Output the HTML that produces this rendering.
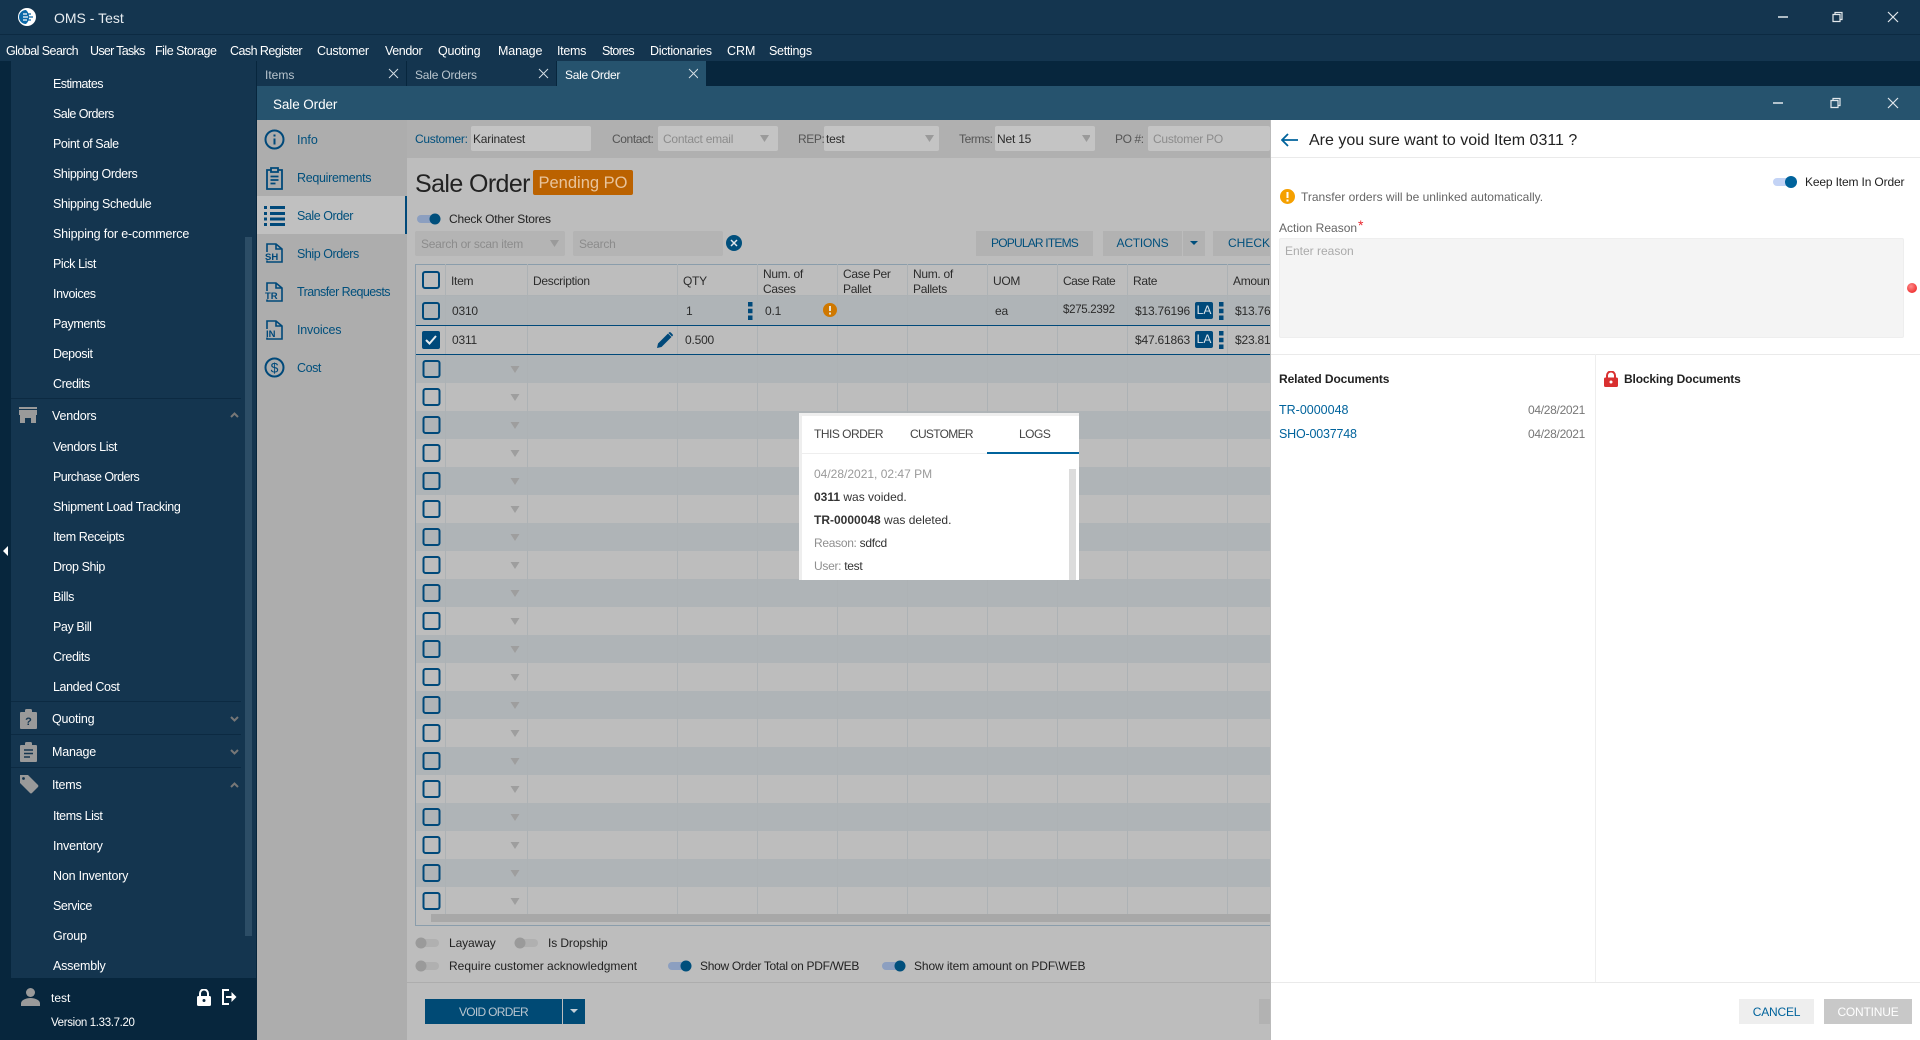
<!DOCTYPE html>
<html lang="en">
<head>
<meta charset="utf-8">
<title>OMS - Test</title>
<style>
html,body{margin:0;padding:0;width:1920px;height:1040px;overflow:hidden;background:#14354f;font-family:"Liberation Sans",sans-serif;font-size:12.5px;color:#222}
div,span,svg{box-sizing:border-box}
.a,.t{position:absolute}
.t{white-space:nowrap;line-height:16px}
.w{color:#fff}
.m{color:#fff;top:43px;font-size:12.5px;letter-spacing:-.3px}
.s{color:#fff;left:53px;font-size:12.5px;letter-spacing:-.4px}
.h{color:#fff;left:52px;font-size:12.5px;letter-spacing:-.2px}
.n{color:#004f7c;left:297px;font-size:12.5px;letter-spacing:-.45px}
.i{background:#c4c4c4;border-radius:2px;top:126px;height:25px}
.lb{color:#555;top:131px;font-size:12px;letter-spacing:-.4px}
.ph{color:#8c8c8c;font-size:12px;letter-spacing:-.25px}
.th{color:#2c2c2c;font-size:12px;line-height:14.5px;letter-spacing:-.3px}
.c{color:#2c2c2c;font-size:12px;letter-spacing:-.2px}
.b{background:#b2b2b2;top:231px;height:25px;color:#004f7c;font-size:12px;line-height:25px;text-align:center}
.v{width:1px;top:264px;height:651px;background:#adb2b5}
.sep{left:11px;width:230px;height:1px;background:#0c2a42}
.tg{height:10px;width:24px}
.lt{color:#222;font-size:12px;letter-spacing:-.2px}
.p{color:#333;font-size:12px;left:814px}
</style>
</head>
<body>
<!-- top bars -->
<div class="a" style="left:0;top:0;width:1920px;height:34px;background:#14354f"></div>
<div class="a" style="left:0;top:34px;width:1920px;height:1px;background:#0c2a42"></div>
<svg class="a" style="left:18px;top:8px" width="18" height="18" viewBox="0 0 18 18"><circle cx="9" cy="9" r="9" fill="#fff"/><path d="M8 2A7 7 0 0 0 8 16A9 9 0 0 0 11 9A9 9 0 0 0 8 2z" fill="#0b69a8"/><path d="M5 6h8M4 9h11M5 12h8" stroke="#0b69a8" stroke-width="1.300"/><path d="M5 6h4M5 9h5M5 12h4" stroke="#fff" stroke-width="1.300"/></svg>
<div class="t w" style="left:54px;top:10px;font-size:14px;color:#e8edf1">OMS - Test</div>
<svg class="a" style="left:1775px;top:10px" width="130" height="14" fill="none" stroke="#e2e8ec" stroke-width="1.200"><path d="M3 7h10" stroke-width="1.500"/><path d="M58 4.500h7v7h-7zM60 4.500v-2h7v7h-2"/><path d="M113 2l10 10M123 2l-10 10"/></svg>

<div class="t m" style="left:6px;letter-spacing:-.55px">Global Search</div>
<div class="t m" style="left:90px;letter-spacing:-.7px">User Tasks</div>
<div class="t m" style="left:155px;letter-spacing:-.5px">File Storage</div>
<div class="t m" style="left:230px;letter-spacing:-.55px">Cash Register</div>
<div class="t m" style="left:317px">Customer</div>
<div class="t m" style="left:385px;letter-spacing:-.4px">Vendor</div>
<div class="t m" style="left:438px;letter-spacing:-.2px">Quoting</div>
<div class="t m" style="left:498px;letter-spacing:-.15px">Manage</div>
<div class="t m" style="left:557px">Items</div>
<div class="t m" style="left:602px;letter-spacing:-.7px">Stores</div>
<div class="t m" style="left:650px">Dictionaries</div>
<div class="t m" style="left:727px;letter-spacing:0">CRM</div>
<div class="t m" style="left:769px">Settings</div>

<!-- tab bar -->
<div class="a" style="left:257px;top:61px;width:1663px;height:25px;background:#07263d"></div>
<div class="a" style="left:257px;top:61px;width:149px;height:25px;background:#14354f"></div>
<div class="a" style="left:407px;top:61px;width:149px;height:25px;background:#14354f"></div>
<div class="a" style="left:557px;top:61px;width:149px;height:25px;background:#26536e"></div>
<div class="t" style="left:265px;top:67px;color:#b9c5ce;font-size:12px">Items</div>
<div class="t" style="left:415px;top:67px;color:#b9c5ce;font-size:12px;letter-spacing:-.2px">Sale Orders</div>
<div class="t w" style="left:565px;top:67px;font-size:12px;letter-spacing:-.3px">Sale Order</div>
<svg class="a" style="left:388px;top:68px" width="310" height="12" fill="none" stroke="#d5dde3" stroke-width="1"><path d="M1 1l9 9M10 1l-9 9M151 1l9 9M160 1l-9 9M301 1l9 9M310 1l-9 9"/></svg>

<!-- window header -->
<div class="a" style="left:257px;top:86px;width:1663px;height:34px;background:#26536e"></div>
<div class="t w" style="left:273px;top:97px;font-size:13.5px;letter-spacing:-.1px">Sale Order</div>
<svg class="a" style="left:1770px;top:96px" width="135" height="14" fill="none" stroke="#e2e8ec" stroke-width="1.200"><path d="M3 7h10" stroke-width="1.500"/><path d="M61 4.500h7v7h-7zM63 4.500v-2h7v7h-2"/><path d="M118 2l10 10M128 2l-10 10"/></svg>

<!-- sidebar -->
<div class="a" style="left:0;top:61px;width:11px;height:979px;background:#07263d"></div>
<div class="a" style="left:11px;top:61px;width:245px;height:917px;background:#14354f"></div>
<div class="a" style="left:0;top:978px;width:257px;height:62px;background:#07263d"></div>
<div class="a" style="left:256px;top:61px;width:1px;height:979px;background:#07263d"></div>
<div class="a" style="left:245px;top:237px;width:7px;height:699px;background:#2c4d66"></div>
<svg class="a" style="left:3px;top:546px" width="6" height="10"><path d="M5 0v10L0 5z" fill="#fff"/></svg>

<div class="t s" style="top:76px;letter-spacing:-.55px">Estimates</div>
<div class="t s" style="top:106px;letter-spacing:-.55px">Sale Orders</div>
<div class="t s" style="top:136px">Point of Sale</div>
<div class="t s" style="top:166px">Shipping Orders</div>
<div class="t s" style="top:196px;letter-spacing:-.35px">Shipping Schedule</div>
<div class="t s" style="top:226px;letter-spacing:-.15px">Shipping for e-commerce</div>
<div class="t s" style="top:256px">Pick List</div>
<div class="t s" style="top:286px">Invoices</div>
<div class="t s" style="top:316px">Payments</div>
<div class="t s" style="top:346px">Deposit</div>
<div class="t s" style="top:376px">Credits</div>
<div class="a sep" style="top:398px"></div>
<svg class="a" style="left:19px;top:407px" width="18" height="16" fill="#9a9a9a"><path d="M0 0h18v2H0zM0 3h18v5H0zM1 8h16v8H12v-5H6v5H1zM3 11h2v3H3z"/></svg>
<div class="t h" style="top:408px">Vendors</div>
<svg class="a" style="left:230px;top:412px" width="9" height="6" fill="none" stroke="#777" stroke-width="2"><path d="M1 5l3.5-3.5L8 5"/></svg>
<div class="t s" style="top:439px">Vendors List</div>
<div class="t s" style="top:469px;letter-spacing:-.55px">Purchase Orders</div>
<div class="t s" style="top:499px;letter-spacing:-.33px">Shipment Load Tracking</div>
<div class="t s" style="top:529px">Item Receipts</div>
<div class="t s" style="top:559px">Drop Ship</div>
<div class="t s" style="top:589px">Bills</div>
<div class="t s" style="top:619px">Pay Bill</div>
<div class="t s" style="top:649px">Credits</div>
<div class="t s" style="top:679px">Landed Cost</div>
<div class="a sep" style="top:701px"></div>
<svg class="a" style="left:20px;top:709px" width="17" height="20"><path d="M1 3h4V1.500A1.500 1.500 0 0 1 6.500 0h4A1.500 1.500 0 0 1 12 1.500V3h4a1 1 0 0 1 1 1v15a1 1 0 0 1-1 1H1a1 1 0 0 1-1-1V4a1 1 0 0 1 1-1z" fill="#9a9a9a"/><text x="8.500" y="16" text-anchor="middle" font-size="11" font-family="Liberation Sans" font-weight="700" fill="#14354f">?</text></svg>
<div class="t h" style="top:711px">Quoting</div>
<svg class="a" style="left:230px;top:716px" width="9" height="6" fill="none" stroke="#777" stroke-width="2"><path d="M1 1l3.500 3.500L8 1"/></svg>
<div class="a sep" style="top:734px"></div>
<svg class="a" style="left:20px;top:742px" width="17" height="20"><path d="M1 3h4V1.500A1.500 1.500 0 0 1 6.500 0h4A1.500 1.500 0 0 1 12 1.500V3h4a1 1 0 0 1 1 1v15a1 1 0 0 1-1 1H1a1 1 0 0 1-1-1V4a1 1 0 0 1 1-1z" fill="#9a9a9a"/><path d="M4 8h9M4 11.500h9M4 15h6" stroke="#14354f" stroke-width="1.600"/></svg>
<div class="t h" style="top:744px">Manage</div>
<svg class="a" style="left:230px;top:749px" width="9" height="6" fill="none" stroke="#777" stroke-width="2"><path d="M1 1l3.500 3.500L8 1"/></svg>
<div class="a sep" style="top:767px"></div>
<svg class="a" style="left:19px;top:775px" width="20" height="19"><path d="M1 0h8l10 10a1.500 1.500 0 0 1 0 2l-6 6a1.500 1.500 0 0 1-2 0L1 8z" fill="#9a9a9a"/><circle cx="4.500" cy="3.500" r="1.400" fill="#14354f"/></svg>
<div class="t h" style="top:777px">Items</div>
<svg class="a" style="left:230px;top:782px" width="9" height="6" fill="none" stroke="#777" stroke-width="2"><path d="M1 5l3.500-3.500L8 5"/></svg>
<div class="t s" style="top:808px">Items List</div>
<div class="t s" style="top:838px;letter-spacing:-.2px">Inventory</div>
<div class="t s" style="top:868px;letter-spacing:-.2px">Non Inventory</div>
<div class="t s" style="top:898px">Service</div>
<div class="t s" style="top:928px;letter-spacing:-.2px">Group</div>
<div class="t s" style="top:958px;letter-spacing:-.2px">Assembly</div>
<svg class="a" style="left:21px;top:988px" width="19" height="18" fill="#9a9a9a"><circle cx="9.500" cy="4.500" r="4.500"/><path d="M0 18v-2.500C0 12 5 10 9.500 10S19 12 19 15.500V18z"/></svg>
<div class="t w" style="left:51px;top:990px;font-size:12px">test</div>
<div class="t w" style="left:51px;top:1015px;font-size:11.500px;letter-spacing:-.35px">Version 1.33.7.20</div>
<svg class="a" style="left:197px;top:989px" width="14" height="17"><path d="M3 7V4.500a4 4 0 0 1 8 0V7" fill="none" stroke="#fff" stroke-width="2"/><rect y="7" width="14" height="10" rx="1.500" fill="#fff"/><circle cx="7" cy="11.500" r="1.500" fill="#07263d"/></svg>
<svg class="a" style="left:222px;top:989px" width="16" height="16" fill="none" stroke="#fff" stroke-width="2"><path d="M7 1H1v14h6"/><path d="M4 8h7"/><path d="M9.500 3l5 5-5 5z" fill="#fff" stroke="none"/></svg>

<!-- left nav in window -->
<div class="a" style="left:257px;top:120px;width:150px;height:920px;background:#adadad"></div>
<div class="a" style="left:257px;top:196px;width:150px;height:38px;background:#c0c0c0;border-right:2px solid #00497a"></div>
<div class="t n" style="top:132px;letter-spacing:0">Info</div>
<div class="t n" style="top:170px;letter-spacing:-.3px">Requirements</div>
<div class="t n" style="top:208px">Sale Order</div>
<div class="t n" style="top:246px">Ship Orders</div>
<div class="t n" style="top:284px;letter-spacing:-.55px">Transfer Requests</div>
<div class="t n" style="top:322px;letter-spacing:-.2px">Invoices</div>
<div class="t n" style="top:360px">Cost</div>
<svg class="a" style="left:264px;top:129px" width="21" height="21" fill="none" stroke="#00497a" stroke-width="2"><circle cx="10.500" cy="10.500" r="9"/><path d="M10.500 9.500v6"/><path d="M10.500 5.500v2"/></svg>
<svg class="a" style="left:266px;top:167px" width="17" height="23" fill="none" stroke="#00497a" stroke-width="1.800"><path d="M5 3H1v19h15V3h-4"/><path d="M5 1h7v4H5z"/><path d="M4.500 9.500h8M4.500 13h8M4.500 16.500h5"/></svg>
<svg class="a" style="left:264px;top:205px" width="21" height="21" fill="#00497a"><path d="M0 1h3v3H0zM6 1h15v3H6zM0 7h3v3H0zM6 7h15v3H6zM0 12.500h3v3H0zM6 12.500h15v3H6zM0 18h3v3H0zM6 18h15v3H6z"/></svg>
<svg class="a" style="left:265px;top:243px" width="19" height="20"><path d="M2 9V1h9l6 5v13H2v-1.500M11 1v5h6" fill="none" stroke="#00497a" stroke-width="1.600"/><rect x="0" y="9.500" width="15" height="8" fill="#adadad"/><text x="0" y="17" font-family="Liberation Sans" font-weight="700" font-size="9.500" fill="#00497a">SH</text></svg>
<svg class="a" style="left:265px;top:282px" width="19" height="20"><path d="M2 9V1h9l6 5v13H2v-1.500M11 1v5h6" fill="none" stroke="#00497a" stroke-width="1.600"/><rect x="0" y="9.500" width="15" height="8" fill="#adadad"/><text x="0" y="17" font-family="Liberation Sans" font-weight="700" font-size="9.500" fill="#00497a">TR</text></svg>
<svg class="a" style="left:265px;top:320px" width="19" height="20"><path d="M2 9V1h9l6 5v13H2v-1.500M11 1v5h6" fill="none" stroke="#00497a" stroke-width="1.600"/><rect x="0" y="9.500" width="15" height="8" fill="#adadad"/><text x="1" y="17" font-family="Liberation Sans" font-weight="700" font-size="9.500" fill="#00497a">IN</text></svg>
<svg class="a" style="left:264px;top:357px" width="21" height="21"><circle cx="10.500" cy="10.500" r="9" fill="none" stroke="#00497a" stroke-width="2"/><text x="10.500" y="15.500" text-anchor="middle" font-family="Liberation Sans" font-size="14" fill="#00497a">$</text></svg>

<!-- main content -->
<div class="a" style="left:407px;top:120px;width:863px;height:920px;background:#bdbdbd"></div>
<div class="a" style="left:407px;top:120px;width:863px;height:38px;background:#b0b0b0"></div>
<div class="t lb" style="left:415px;color:#004f7c;letter-spacing:-.3px">Customer:</div>
<div class="a i" style="left:471px;width:120px"></div>
<div class="t c" style="left:473px;top:131px">Karinatest</div>
<div class="t lb" style="left:612px">Contact:</div>
<div class="a i" style="left:658px;width:120px"></div>
<div class="t ph" style="left:663px;top:131px">Contact email</div>
<div class="t lb" style="left:798px">REP:</div>
<div class="a i" style="left:824px;width:115px"></div>
<div class="t c" style="left:826px;top:131px">test</div>
<div class="t lb" style="left:959px">Terms:</div>
<div class="a i" style="left:995px;width:100px"></div>
<div class="t c" style="left:997px;top:131px">Net 15</div>
<div class="t lb" style="left:1115px">PO #:</div>
<div class="a i" style="left:1148px;width:122px"></div>
<div class="t ph" style="left:1153px;top:131px">Customer PO</div>
<svg class="a" style="left:760px;top:135px" width="330" height="8" fill="#9a9a9a"><path d="M0 0h9L4.500 7zM165 0h9l-4.500 7zM322 0h9l-4.500 7z"/></svg>

<div class="t" style="left:415px;top:169px;font-size:25px;line-height:30px;color:#222;letter-spacing:-.6px">Sale Order</div>
<div class="a" style="left:533px;top:170px;width:100px;height:25px;background:#bb6200;border-radius:2px;color:#e8c49c;font-size:16.500px;line-height:26px;text-align:center">Pending PO</div>

<svg class="a tg" style="left:417px;top:212px;height:14px" width="24" height="14"><rect y="3" width="22" height="8" rx="4" fill="#8c9fc0"/><circle cx="18" cy="7" r="5.500" fill="#004f7c"/></svg>
<div class="t lt" style="left:449px;top:211px">Check Other Stores</div>

<div class="a" style="left:415px;top:231px;width:150px;height:25px;background:#b4b4b4;border-radius:2px"></div>
<div class="t ph" style="left:421px;top:236px">Search or scan item</div>
<svg class="a" style="left:550px;top:240px" width="9" height="8"><path d="M0 0h9L4.500 7z" fill="#9a9a9a"/></svg>
<div class="a" style="left:573px;top:231px;width:150px;height:25px;background:#b4b4b4;border-radius:2px"></div>
<div class="t ph" style="left:579px;top:236px">Search</div>
<svg class="a" style="left:726px;top:235px" width="16" height="16"><circle cx="8" cy="8" r="8" fill="#004f7c"/><path d="M5 5l6 6M11 5l-6 6" stroke="#dfe6ea" stroke-width="1.500"/></svg>

<div class="a b" style="left:976px;width:117px;letter-spacing:-.8px">POPULAR ITEMS</div>
<div class="a b" style="left:1103px;width:79px;letter-spacing:-.2px">ACTIONS</div>
<div class="a b" style="left:1183px;width:22px"></div>
<svg class="a" style="left:1190px;top:241px" width="8" height="5"><path d="M0 0h8L4 4z" fill="#004f7c"/></svg>
<div class="a b" style="left:1213px;width:57px;text-align:left;padding-left:15px">CHECK</div>

<!-- table -->
<div class="a" style="left:415px;top:264px;width:855px;height:662px;border:1px solid #8a9dab;border-right:0"></div>
<div class="a" style="left:416px;top:295px;width:854px;height:30px;background:#afb4b7"></div>
<div class="a" style="left:416px;top:295px;width:854px;height:1px;background:#adb2b5"></div>
<div class="a" style="left:416px;top:355px;width:854px;height:560px;background:repeating-linear-gradient(#afb4b7 0 28px,#bdbdbd 28px 56px)"></div>
<div class="a v" style="left:445px"></div>
<div class="a v" style="left:527px"></div>
<div class="a v" style="left:677px"></div>
<div class="a v" style="left:757px"></div>
<div class="a v" style="left:837px"></div>
<div class="a v" style="left:907px"></div>
<div class="a v" style="left:987px"></div>
<div class="a v" style="left:1057px"></div>
<div class="a v" style="left:1127px"></div>
<div class="a v" style="left:1227px"></div>
<div class="a" style="left:416px;top:325px;width:854px;height:1px;background:#00497a"></div>
<div class="a" style="left:416px;top:354px;width:854px;height:1px;background:#00497a"></div>
<div class="a" style="left:431px;top:914px;width:839px;height:8px;background:#a8a8a8"></div>

<div class="t th" style="left:451px;top:274px">Item</div>
<div class="t th" style="left:533px;top:274px">Description</div>
<div class="t th" style="left:683px;top:274px">QTY</div>
<div class="t th" style="left:763px;top:267px">Num. of<br>Cases</div>
<div class="t th" style="left:843px;top:267px">Case Per<br>Pallet</div>
<div class="t th" style="left:913px;top:267px">Num. of<br>Pallets</div>
<div class="t th" style="left:993px;top:274px">UOM</div>
<div class="t th" style="left:1063px;top:274px;letter-spacing:-.5px">Case Rate</div>
<div class="t th" style="left:1133px;top:274px">Rate</div>
<div class="t th" style="left:1233px;top:274px">Amount</div>

<svg class="a" style="left:422px;top:271px" width="19" height="80"><rect x="1" y="1" width="16" height="16" rx="2" fill="none" stroke="#00497a" stroke-width="2"/><rect x="1" y="32" width="16" height="16" rx="2" fill="none" stroke="#00497a" stroke-width="2"/><rect y="60" width="18" height="18" rx="2" fill="#00497a"/><path d="M4 69l3.500 3.500L14 65" fill="none" stroke="#e6ebee" stroke-width="2"/></svg>
<svg class="a" style="left:415px;top:355px" width="110" height="560"><defs><pattern id="r" width="110" height="28" patternUnits="userSpaceOnUse"><rect x="8.500" y="6" width="16" height="16" rx="2" fill="none" stroke="#00497a" stroke-width="2"/><path d="M95.500 11h9l-4.500 7z" fill="#9e9e9e"/></pattern></defs><rect width="110" height="560" fill="url(#r)"/></svg>

<div class="t c" style="left:452px;top:303px">0310</div>
<div class="t c" style="left:686px;top:303px">1</div>
<div class="t c" style="left:765px;top:303px">0.1</div>
<div class="t c" style="left:995px;top:303px">ea</div>
<div class="t c" style="left:1063px;top:302px;font-size:11.500px;letter-spacing:-.3px">$275.2392</div>
<div class="t c" style="left:1135px;top:303px">$13.76196</div>
<div class="t c" style="left:1235px;top:303px">$13.76</div>
<div class="t c" style="left:452px;top:332px">0311</div>
<div class="t c" style="left:685px;top:332px">0.500</div>
<div class="t c" style="left:1135px;top:332px">$47.61863</div>
<div class="t c" style="left:1235px;top:332px">$23.81</div>
<svg class="a" style="left:748px;top:302px" width="5" height="18" fill="#00497a"><path d="M0 0h4.500v4.500H0zM0 6.800h4.500v4.500H0zM0 13.500h4.500V18H0z"/></svg>
<svg class="a" style="left:1219px;top:302px" width="5" height="18" fill="#00497a"><path d="M0 0h4.500v4.500H0zM0 6.800h4.500v4.500H0zM0 13.500h4.500V18H0z"/></svg>
<svg class="a" style="left:1219px;top:331px" width="5" height="18" fill="#00497a"><path d="M0 0h4.500v4.500H0zM0 6.800h4.500v4.500H0zM0 13.500h4.500V18H0z"/></svg>
<div class="a" style="left:1195px;top:302px;width:18px;height:17px;background:#00497a;border-radius:2px;color:#dfe6ea;font-size:12px;line-height:17px;text-align:center">LA</div>
<div class="a" style="left:1195px;top:331px;width:18px;height:17px;background:#00497a;border-radius:2px;color:#dfe6ea;font-size:12px;line-height:17px;text-align:center">LA</div>
<svg class="a" style="left:823px;top:303px" width="14" height="14"><circle cx="7" cy="7" r="7" fill="#cf7800"/><path d="M7 3v5" stroke="#e9e4d8" stroke-width="2"/><path d="M7 9.500v2" stroke="#e9e4d8" stroke-width="2"/></svg>
<svg class="a" style="left:657px;top:332px" width="16" height="16" fill="#00497a"><path d="M0 16l1-4.500L11 1.500 14.500 5 4.500 15zM12 .5a1.300 1.300 0 0 1 1.800 0l1.700 1.700a1.300 1.300 0 0 1 0 1.800L15 4.500 11.500 1z"/></svg>

<!-- popup -->
<div class="a" style="left:799px;top:413px;width:280px;height:167px;background:#fff;border-left:3px solid #eee;border-top:3px solid #eee"></div>
<div class="t" style="left:814px;top:426px;font-size:12px;color:#444;letter-spacing:-.5px">THIS ORDER</div>
<div class="t" style="left:910px;top:426px;font-size:12px;color:#444;letter-spacing:-.7px">CUSTOMER</div>
<div class="t" style="left:1019px;top:426px;font-size:12px;color:#444;letter-spacing:-.5px">LOGS</div>
<div class="a" style="left:802px;top:453px;width:277px;height:1px;background:#eee"></div>
<div class="a" style="left:987px;top:452px;width:92px;height:2px;background:#00639c"></div>
<div class="a" style="left:1069px;top:469px;width:7px;height:111px;background:#dcdcdc"></div>
<div class="t p" style="top:466px;color:#9a9a9a">04/28/2021, 02:47 PM</div>
<div class="t p" style="top:489px"><b>0311</b> was voided.</div>
<div class="t p" style="top:512px"><b>TR-0000048</b> was deleted.</div>
<div class="t p" style="top:535px;letter-spacing:-.3px"><span style="color:#8f8f8f">Reason:</span> sdfcd</div>
<div class="t p" style="top:558px;letter-spacing:-.3px"><span style="color:#8f8f8f">User:</span> test</div>

<!-- bottom toggles -->
<svg class="a" style="left:415px;top:936px" width="125" height="14"><rect x="2" y="3" width="22" height="8" rx="4" fill="#b0b0b0"/><circle cx="6" cy="7" r="5.500" fill="#9a9a9a"/><rect x="101" y="3" width="22" height="8" rx="4" fill="#b0b0b0"/><circle cx="105" cy="7" r="5.500" fill="#9a9a9a"/></svg>
<svg class="a" style="left:415px;top:959px" width="495" height="14"><rect x="2" y="3" width="22" height="8" rx="4" fill="#b0b0b0"/><circle cx="6" cy="7" r="5.500" fill="#9a9a9a"/><rect x="253" y="3" width="22" height="8" rx="4" fill="#8c9fc0"/><circle cx="271" cy="7" r="5.500" fill="#004f7c"/><rect x="467" y="3" width="22" height="8" rx="4" fill="#8c9fc0"/><circle cx="485" cy="7" r="5.500" fill="#004f7c"/></svg>
<div class="t lt" style="left:449px;top:935px;letter-spacing:-.1px">Layaway</div>
<div class="t lt" style="left:548px;top:935px;letter-spacing:-.1px">Is Dropship</div>
<div class="t lt" style="left:449px;top:958px;letter-spacing:0">Require customer acknowledgment</div>
<div class="t lt" style="left:700px;top:958px;letter-spacing:-.3px">Show Order Total on PDF/WEB</div>
<div class="t lt" style="left:914px;top:958px;letter-spacing:-.1px">Show item amount on PDF\WEB</div>
<div class="a" style="left:407px;top:982px;width:863px;height:1px;background:#adadad"></div>
<div class="a" style="left:425px;top:999px;width:137px;height:25px;background:#004a75;color:#b8c5cf;font-size:12px;line-height:27px;text-align:center;letter-spacing:-.7px">VOID ORDER</div>
<div class="a" style="left:563px;top:999px;width:22px;height:25px;background:#004a75"></div>
<svg class="a" style="left:570px;top:1009px" width="8" height="5"><path d="M0 0h8L4 4z" fill="#c4cfd8"/></svg>
<div class="a" style="left:1259px;top:999px;width:11px;height:25px;background:#b2b2b2"></div>

<!-- right panel -->
<div class="a" style="left:1270px;top:120px;width:650px;height:920px;background:#fff;border-left:1px solid #bbb"></div>
<svg class="a" style="left:1281px;top:133px" width="17" height="14" fill="none" stroke="#00639c" stroke-width="1.800"><path d="M1 7h16M7 1L1 7l6 6"/></svg>
<div class="t" style="left:1309px;top:132px;font-size:16px;line-height:18px;color:#222">Are you sure want to void Item 0311 ?</div>
<div class="a" style="left:1271px;top:157px;width:649px;height:1px;background:#eaeaea"></div>
<svg class="a" style="left:1773px;top:175px" width="25" height="14"><rect y="3" width="22" height="8" rx="4" fill="#c3d3f5"/><circle cx="18" cy="7" r="6" fill="#00639c"/></svg>
<div class="t" style="left:1805px;top:174px;font-size:12px;color:#222;letter-spacing:-.15px">Keep Item In Order</div>
<svg class="a" style="left:1280px;top:189px" width="15" height="15"><circle cx="7.500" cy="7.500" r="7.500" fill="#f5a000"/><path d="M7.500 3v6" stroke="#fff" stroke-width="2"/><path d="M7.500 10.500v2" stroke="#fff" stroke-width="2"/></svg>
<div class="t" style="left:1301px;top:189px;font-size:12px;color:#666">Transfer orders will be unlinked automatically.</div>
<div class="t" style="left:1279px;top:219px;font-size:12px;color:#666">Action Reason<span style="color:#e8262d;font-size:14px;position:relative;top:-2px;left:1px">*</span></div>
<div class="a" style="left:1279px;top:238px;width:625px;height:100px;background:#f4f4f4;border:1px solid #eee;border-radius:2px"></div>
<div class="t" style="left:1285px;top:243px;font-size:12px;color:#aaa">Enter reason</div>
<svg class="a" style="left:1907px;top:283px" width="10" height="10"><defs><radialGradient id="rd" cx=".4" cy=".35" r=".7"><stop offset="0" stop-color="#ff8a8a"/><stop offset="1" stop-color="#ee2c2c"/></radialGradient></defs><circle cx="5" cy="5" r="5" fill="url(#rd)"/></svg>
<div class="a" style="left:1271px;top:354px;width:649px;height:1px;background:#eaeaea"></div>
<div class="a" style="left:1595px;top:354px;width:1px;height:628px;background:#eee"></div>
<div class="a" style="left:1271px;top:982px;width:649px;height:1px;background:#eaeaea"></div>
<div class="t" style="left:1279px;top:371px;font-size:12px;font-weight:700;color:#222;letter-spacing:-.1px">Related Documents</div>
<svg class="a" style="left:1604px;top:371px" width="14" height="16"><path d="M3 7V4.500a4 4 0 0 1 8 0V7" fill="none" stroke="#d93030" stroke-width="2"/><rect y="6.500" width="14" height="9.500" rx="1.500" fill="#d93030"/><circle cx="7" cy="11" r="1.500" fill="#fff"/></svg>
<div class="t" style="left:1624px;top:371px;font-size:12px;font-weight:700;color:#222;letter-spacing:-.15px">Blocking Documents</div>
<div class="t" style="left:1279px;top:402px;font-size:12.500px;color:#00639c">TR-0000048</div>
<div class="t" style="left:1279px;top:426px;font-size:12.500px;color:#00639c;letter-spacing:-.2px">SHO-0037748</div>
<div class="t" style="left:1528px;top:402px;font-size:12px;color:#777;letter-spacing:-.3px">04/28/2021</div>
<div class="t" style="left:1528px;top:426px;font-size:12px;color:#777;letter-spacing:-.3px">04/28/2021</div>
<div class="a" style="left:1739px;top:999px;width:75px;height:25px;background:#eee;color:#00639c;font-size:12px;line-height:27px;text-align:center;letter-spacing:-.2px">CANCEL</div>
<div class="a" style="left:1824px;top:999px;width:88px;height:25px;background:#c8c8c8;color:#fff;font-size:12px;line-height:27px;text-align:center;letter-spacing:-.2px">CONTINUE</div>
</body>
</html>
